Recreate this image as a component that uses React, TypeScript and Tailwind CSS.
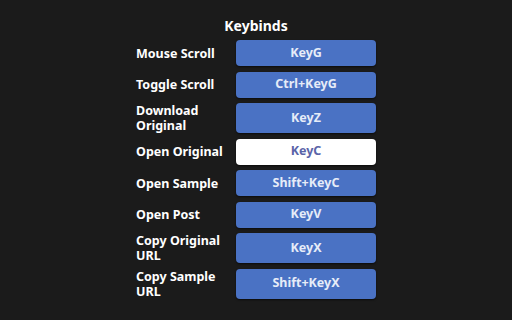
import React from 'react';

const binds: { label: string; key: string; active?: boolean }[] = [
  { label: 'Mouse Scroll', key: 'KeyG' },
  { label: 'Toggle Scroll', key: 'Ctrl+KeyG' },
  { label: 'Download Original', key: 'KeyZ' },
  { label: 'Open Original', key: 'KeyC', active: true },
  { label: 'Open Sample', key: 'Shift+KeyC' },
  { label: 'Open Post', key: 'KeyV' },
  { label: 'Copy Original URL', key: 'KeyX' },
  { label: 'Copy Sample URL', key: 'Shift+KeyX' },
];

export default function App() {
  return (
    <div className="w-[512px] h-[320px] bg-[#1b1b1b] text-white flex flex-col items-center font-['Noto_Sans',sans-serif]">
      <h1 className="mt-[15px] text-[14px] leading-[21px] font-bold">Keybinds</h1>
      <div className="mt-[4px] grid grid-cols-[94px_140px] gap-x-[6px] gap-y-[5.5px] w-[240px]">
        {binds.map((b) => (
          <React.Fragment key={b.label}>
            <div className="self-center text-[12.5px] leading-[15px] font-bold">{b.label}</div>
            <button
              className={`min-h-[26px] rounded-[4px] text-[12.5px] font-bold shadow-[0_1px_2px_rgba(0,0,0,0.6)] ${
                b.active ? 'bg-white text-[#5a64a8]' : 'bg-[#4a72c4] text-[#e6ecf8]'
              }`}
            >
              {b.key}
            </button>
          </React.Fragment>
        ))}
      </div>
    </div>
  );
}
